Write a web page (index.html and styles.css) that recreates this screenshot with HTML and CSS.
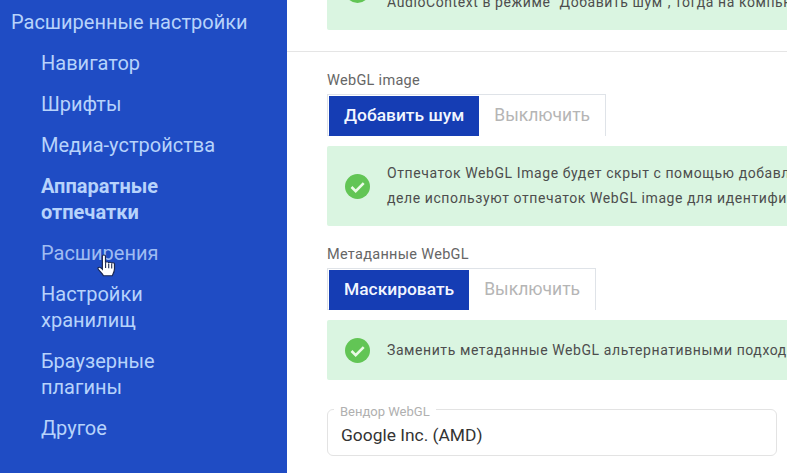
FILE: index.html
```html
<!DOCTYPE html>
<html lang="ru">
<head>
<meta charset="utf-8">
<title>Расширенные настройки</title>
<link rel="stylesheet" href="styles.css">
</head>
<body>
<div class="app">
  <nav class="sidebar">
    <div class="sidebar-title">Расширенные настройки</div>
    <a class="nav-item">Навигатор</a>
    <a class="nav-item">Шрифты</a>
    <a class="nav-item">Медиа-устройства</a>
    <a class="nav-item is-active">Аппаратные<br>отпечатки</a>
    <a class="nav-item is-hover">Расширения</a>
    <a class="nav-item">Настройки<br>хранилищ</a>
    <a class="nav-item">Браузерные<br>плагины</a>
    <a class="nav-item">Другое</a>
  </nav>
  <main class="content">
    <section class="block block-top">
      <div class="notice">
        <svg class="check" viewBox="0 0 25 25"><circle cx="12.5" cy="12.5" r="12.5" fill="#62c555"/><path d="M6.500 13l4.200 4.200 8-8" fill="none" stroke="#eafbe6" stroke-width="2.600"/></svg>
        <p><br>AudioContext в режиме "Добавить шум", тогда на компью</p>
      </div>
    </section>
    <section class="block">
      <div class="field-label">WebGL image</div>
      <div class="segmented">
        <button class="seg seg-on">Добавить шум</button>
        <button class="seg">Выключить</button>
      </div>
      <div class="notice">
        <svg class="check" viewBox="0 0 25 25"><circle cx="12.5" cy="12.5" r="12.5" fill="#62c555"/><path d="M6.500 13l4.200 4.200 8-8" fill="none" stroke="#eafbe6" stroke-width="2.600"/></svg>
        <p>Отпечаток WebGL Image будет скрыт с помощью добавл<br>деле используют отпечаток WebGL image для идентифи</p>
      </div>
      <div class="field-label">Метаданные WebGL</div>
      <div class="segmented">
        <button class="seg seg-on">Маскировать</button>
        <button class="seg">Выключить</button>
      </div>
      <div class="notice">
        <svg class="check" viewBox="0 0 25 25"><circle cx="12.5" cy="12.5" r="12.5" fill="#62c555"/><path d="M6.500 13l4.200 4.200 8-8" fill="none" stroke="#eafbe6" stroke-width="2.600"/></svg>
        <p>Заменить метаданные WebGL альтернативными подход</p>
      </div>
      <div class="input-box">
        <span class="input-label">Вендор WebGL</span>
        <span class="input-value">Google Inc. (AMD)</span>
      </div>
    </section>
  </main>
  <svg class="cursor" viewBox="0 0 20 25" preserveAspectRatio="none">
    <path d="M5.300 2.200c0-1.600 2.600-1.600 2.600 0v7c.2-1.400 2.500-1.300 2.600.2.200-1.200 2.400-1.200 2.500.3.300-1 2.300-.9 2.400.6v5.400c0 3-1.400 5.600-1.900 7H6.200c-.6-2-2.200-3.500-4-6.200-1-1.500-.6-2.800.6-2.800 1 0 1.800 1.100 2.500 2.100z" fill="#fff" stroke="#1a2750" stroke-width="1"/>
    <path d="M8 9.500v5M10.600 9.800v5M13.100 10v5" stroke="#1a2750" stroke-width=".9" fill="none"/>
  </svg>
</div>
</body>
</html>
```
FILE: styles.css
```css
* { box-sizing: border-box; }
html, body { margin: 0; height: 100%; overflow: hidden; background: #fff; }
body { font-family: Roboto, "Noto Sans", sans-serif; }
.app { display: flex; height: 473px; width: 787px; position: relative; overflow: hidden; }

.sidebar {
  width: 287px;
  flex: none;
  background: #1f4cc4;
  display: flex;
  flex-direction: column;
  gap: 15px;
  padding: 9px 0 0 41px;
  color: #b7d3fb;
  font-size: 20px;
  line-height: 26px;
}
.sidebar-title { margin-left: -30px; white-space: nowrap; }
.nav-item { display: block; }
.nav-item.is-active { font-weight: 700; }
.nav-item.is-hover { color: #9fbcf2; }

.content { flex: 1; min-width: 0; overflow: hidden; }
.block { padding: 0 10px 0 40px; }
.block-top {
  margin-top: -60px;
  padding-bottom: 21px;
  border-bottom: 1px solid #e5e5e5;
}
.field-label {
  font-size: 14.5px;
  line-height: 20px;
  color: #666;
  letter-spacing: .3px;
  padding-top: 19px;
  margin-bottom: 3px;
}

.segmented {
  display: inline-flex;
  height: 42px;
  padding: 1px 0 1px 1px;
  border: 1px solid #dfe3e8;
  vertical-align: top;
}
.seg {
  font: 400 17.5px/38px Roboto, sans-serif;
  height: 40px;
  padding: 0 15px 2px 15px;
  border: 0;
  background: #fff;
  color: #b5b5b5;
}
.seg-on { background: #153db4; color: #f2f6ff; font-weight: 500; font-size: 17.4px; }

.notice {
  display: flex;
  align-items: center;
  gap: 17px;
  min-height: 60px;
  margin: 10px -120px 0 0;
  padding: 15px 0 15px 18px;
  background: #daf5e1;
  border-radius: 2px;
}
.check { width: 25px; height: 25px; flex: none; }
.notice p {
  margin: 0;
  font-size: 14px;
  line-height: 25px;
  letter-spacing: .58px;
  color: #4d4d4d;
  white-space: nowrap;
}

.input-box {
  position: relative;
  height: 47px;
  margin-top: 29px;
  border: 1px solid #e3e3e3;
  border-radius: 6px;
  padding: 12px 13px 0;
}
.input-label {
  position: absolute;
  left: 6px;
  top: -3px;
  padding: 0 6px 0 6px;
  background: #fff;
  font-size: 13px;
  line-height: 10px;
  color: #b0b0b0;
}
.input-value { font-size: 17.4px; line-height: 26px; color: #333; }

.cursor { position: absolute; left: 96px; top: 254px; width: 24px; height: 24px; }
```
